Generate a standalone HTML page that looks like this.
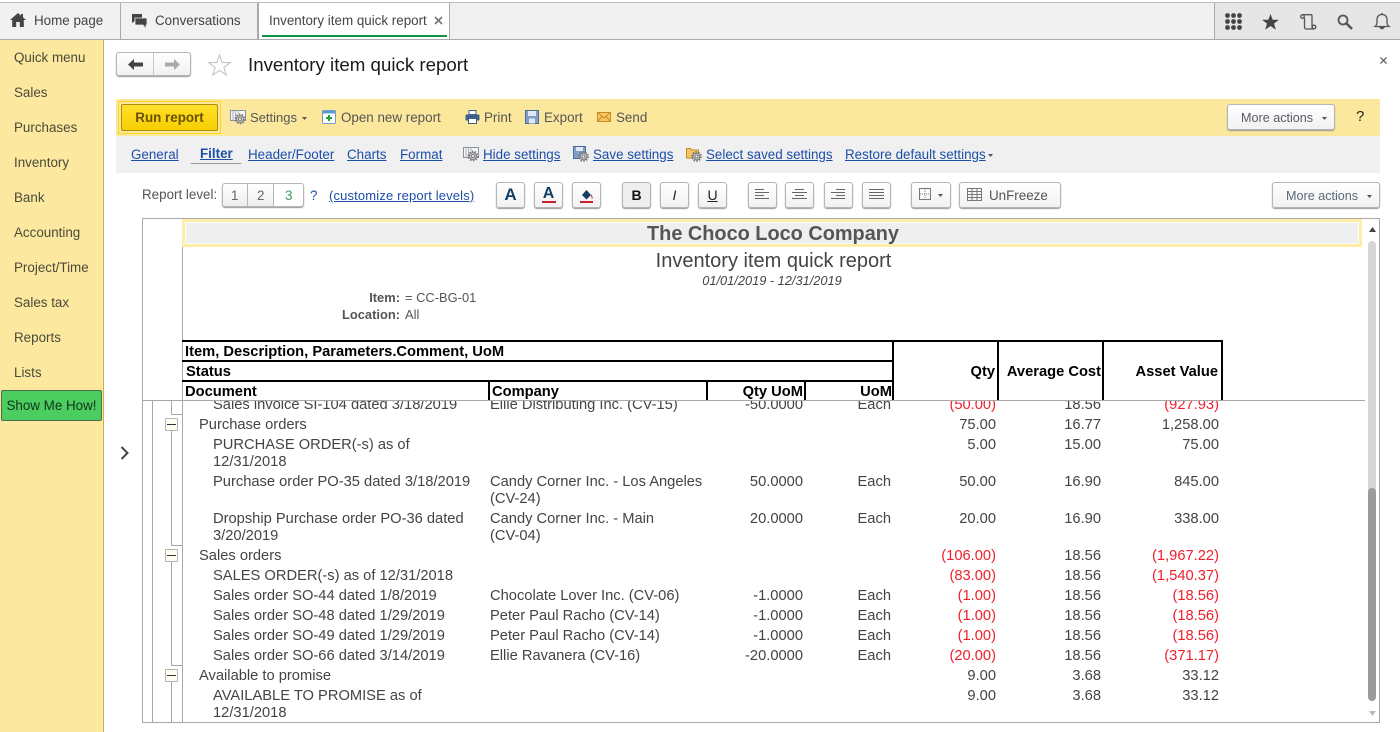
<!DOCTYPE html>
<html><head><meta charset="utf-8"><title>Inventory item quick report</title>
<style>
*{box-sizing:border-box}
html,body{margin:0;padding:0;width:1400px;height:732px;overflow:hidden;background:#fff;font-family:"Liberation Sans",sans-serif;font-size:13.4px;color:#4b4b4b}
.a{position:absolute}
.t{position:absolute;white-space:nowrap;line-height:20px;height:20px;margin-top:1px}
.r{position:absolute;white-space:nowrap;line-height:20px;height:20px;text-align:right;margin-top:1px}
.l{color:#1c4fa8;text-decoration:underline}
.b{position:absolute;background:linear-gradient(#fff,#f1f1f1);border:1px solid #b5b5b5;border-radius:3px;box-shadow:0 1px 1px #999}
.k{position:absolute;background:#000}
.red{color:#f0202c}
svg{position:absolute;overflow:visible}
#body .t,#body .r{color:#444;font-size:14.7px}
#body .red{color:#f0202c}
.h{font-size:14.7px;font-weight:bold;color:#000}
.m{position:absolute;left:14px;color:#4a4a3a;line-height:20px;margin-top:1px}
</style></head><body>

<!-- top bar -->
<div class="a" style="left:0;top:2px;width:1400px;height:38px;background:#f1f1f1;border-top:1px solid #bdbdbd;border-bottom:1px solid #aaa"></div>
<div class="a" style="left:120px;top:3px;width:1px;height:36px;background:#aaa"></div>
<div class="a" style="left:257px;top:3px;width:2px;height:36px;background:#aaa"></div>
<div class="a" style="left:259px;top:3px;width:191px;height:36px;background:#fff;border-right:1px solid #aaa"></div>
<div class="a" style="left:262px;top:35px;width:185px;height:2px;background:#0e9347"></div>
<div class="a" style="left:1214px;top:3px;width:186px;height:36px;background:#e6e6e6;border-left:1px solid #aaa"></div>
<svg style="left:10px;top:13px" width="16" height="14" viewBox="0 0 16 14"><path d="M8 0L0 7h2.200v7h4V9h3.600v5h4V7H16L13 4.400V1h-2v1.700z" fill="#444"/></svg>
<div class="t" style="left:34px;top:10px;color:#444">Home page</div>
<svg style="left:132px;top:14px" width="15" height="15" viewBox="0 0 15 15"><path d="M0 0h10v7H3L0 9z" fill="#444"/><path d="M3 4h12v7h-1v4l-3-4H3z" fill="#444" stroke="#f1f1f1" stroke-width=".8"/></svg>
<div class="t" style="left:155px;top:10px;color:#444">Conversations</div>
<div class="t" style="left:269px;top:10px;color:#444">Inventory item quick report</div>
<svg style="left:434px;top:16px" width="9" height="9" viewBox="0 0 9 9"><path d="M1 1l7 7M8 1L1 8" stroke="#777" stroke-width="1.700"/></svg>
<svg style="left:1225px;top:13px" width="17" height="17" viewBox="0 0 17 17" fill="#444"><circle cx="2.500" cy="2.500" r="2.400"/><circle cx="8.500" cy="2.500" r="2.400"/><circle cx="14.500" cy="2.500" r="2.400"/><circle cx="2.500" cy="8.500" r="2.400"/><circle cx="8.500" cy="8.500" r="2.400"/><circle cx="14.500" cy="8.500" r="2.400"/><circle cx="2.500" cy="14.500" r="2.400"/><circle cx="8.500" cy="14.500" r="2.400"/><circle cx="14.500" cy="14.500" r="2.400"/></svg>
<svg style="left:1262px;top:14px" width="17" height="16" viewBox="0 0 17 16"><path d="M8.500 0l2.200 5.800H17l-5 3.800 1.900 6.200-5.400-3.800-5.400 3.800L5 9.600 0 5.800h6.300z" fill="#444"/></svg>
<svg style="left:1300px;top:14px" width="17" height="16" viewBox="0 0 17 16" fill="none" stroke="#555" stroke-width="1.300"><circle cx="2.500" cy="2.500" r="1.800"/><path d="M2.500 .7H11Q12 .7 12 2V12.500Q12 15 14 15H6.500Q4.500 15 4.500 12.500V4"/><circle cx="14" cy="13" r="1.800"/></svg>
<svg style="left:1337px;top:14px" width="16" height="16" viewBox="0 0 16 16" fill="none" stroke="#555"><circle cx="6" cy="6" r="4.500" stroke-width="1.800"/><path d="M9.500 9.500L15 15" stroke-width="2.600"/></svg>
<svg style="left:1374px;top:13px" width="16" height="17" viewBox="0 0 16 17" fill="none" stroke="#555" stroke-width="1.300"><path d="M1 13.500Q3 12 3 9V6.500C3 3.500 5 1.500 8 1.500S13 3.500 13 6.500V9Q13 12 15 13.500Z"/><path d="M6 14.500Q8 17 10 14.500Z" fill="#555"/><path d="M8 0v2" stroke-width="1.600"/></svg>

<!-- sidebar -->
<div class="a" style="left:0;top:40px;width:104px;height:692px;background:#fce99f;border-right:1px solid #c8b04a"></div>
<div class="m" style="top:47px">Quick menu</div>
<div class="m" style="top:82px">Sales</div>
<div class="m" style="top:117px">Purchases</div>
<div class="m" style="top:152px">Inventory</div>
<div class="m" style="top:187px">Bank</div>
<div class="m" style="top:222px">Accounting</div>
<div class="m" style="top:257px">Project/Time</div>
<div class="m" style="top:292px">Sales tax</div>
<div class="m" style="top:327px">Reports</div>
<div class="m" style="top:362px">Lists</div>
<div class="a" style="left:1px;top:390px;width:101px;height:31px;background:#4bce5f;border:1px solid #4e6b50;border-radius:2px;color:#12331a;line-height:29px;text-align:center;white-space:nowrap">Show Me How!</div>
<svg style="left:120px;top:446px" width="9" height="14" viewBox="0 0 9 14"><path d="M1.500 1l6 6-6 6" fill="none" stroke="#444" stroke-width="2"/></svg>

<!-- title -->
<div class="b" style="left:116px;top:52px;width:75px;height:24px"></div>
<div class="a" style="left:153px;top:53px;width:1px;height:22px;background:#c8c8c8"></div>
<svg style="left:128px;top:59px" width="15" height="11" viewBox="0 0 15 11"><path d="M0 5.500L6 0v3.500h9v4H6V11z" fill="#444"/></svg>
<svg style="left:165px;top:59px" width="15" height="11" viewBox="0 0 15 11"><path d="M15 5.500L9 0v3.500H0v4h9V11z" fill="#aaa"/></svg>
<svg style="left:208px;top:54px" width="23" height="22" viewBox="0 0 25 24"><path d="M12.500 1l3 8.300h8.800l-7 5.300 2.600 8.400-7.400-5.100L5.100 23l2.600-8.400-7-5.300h8.800z" fill="#fff" stroke="#c4c4c4" stroke-width="1.200"/></svg>
<div class="a" style="left:248px;top:53px;font-size:18.7px;line-height:24px;color:#1a1a1a;white-space:nowrap">Inventory item quick report</div>
<svg style="left:1380px;top:57px" width="7" height="7" viewBox="0 0 8 8"><path d="M.5.500l7 7M7.500.500l-7 7" stroke="#555" stroke-width="1.300"/></svg>

<!-- yellow command bar -->
<div class="a" style="left:116px;top:99px;width:1264px;height:37px;background:#fce89d"></div>
<div class="a" style="left:118px;top:101px;width:103px;height:33px;border:1px solid #ffd520"></div>
<div class="a" style="left:121px;top:104px;width:97px;height:27px;background:linear-gradient(#ffdf2a,#f7cf00);border:1px solid #a98f0c;border-radius:2px;color:#6a5100;font-weight:bold;line-height:25px;text-align:center;white-space:nowrap">Run report</div>
<svg style="left:230px;top:110px" width="17" height="15" viewBox="0 0 17 15"><rect x=".5" y=".5" width="15" height="10" fill="#f8f8f8" stroke="#8a93a0"/><path d="M3 1v9M5.500 1v9M8 1v3" stroke="#a8b0bb"/><circle cx="10" cy="9" r="4.600" fill="none" stroke="#777" stroke-width="1.600" stroke-dasharray="1.600 1.300"/><circle cx="10" cy="9" r="3.400" fill="#ddd" stroke="#777"/><circle cx="10" cy="9" r="1.500" fill="#fff" stroke="#777"/></svg>
<div class="t" style="left:250px;top:107px;color:#555;font-size:13px">Settings</div>
<svg style="left:302px;top:117px" width="5" height="3"><path d="M0 0h5L2.500 3z" fill="#555"/></svg>
<svg style="left:322px;top:110px" width="14" height="14" viewBox="0 0 14 14"><rect x=".5" y=".5" width="13" height="13" rx="1" fill="#fff" stroke="#7a9cc6"/><rect x="1" y="1" width="12" height="2.500" fill="#5b9bd5"/><path d="M7 5v6M4 8h6" stroke="#23a036" stroke-width="2"/></svg>
<div class="t" style="left:341px;top:107px;color:#555">Open new report</div>
<svg style="left:465px;top:110px" width="15" height="14" viewBox="0 0 15 14"><rect x="4" y=".5" width="7" height="4" fill="#fff" stroke="#3f5f8a"/><rect x=".5" y="4.500" width="14" height="6" rx="1" fill="#3f5f8a"/><rect x="3.500" y="8.500" width="8" height="5" fill="#fff" stroke="#3f5f8a"/></svg>
<div class="t" style="left:484px;top:107px;color:#555">Print</div>
<svg style="left:525px;top:110px" width="14" height="14" viewBox="0 0 14 14"><rect x=".5" y=".5" width="13" height="13" fill="#7f9fc8" stroke="#4a6c9c"/><rect x="3" y="1" width="8" height="5" fill="#dfe8f3"/><rect x="4" y="8.500" width="6" height="5" fill="#dfe8f3"/></svg>
<div class="t" style="left:544px;top:107px;color:#555">Export</div>
<svg style="left:597px;top:112px" width="14" height="10" viewBox="0 0 14 10"><rect x=".5" y=".5" width="13" height="9" fill="#f6c667" stroke="#c98a23"/><path d="M.5.500L7 6 13.500.500M.5 9.500L5 4.500M13.500 9.500L9 4.500" fill="none" stroke="#c98a23"/></svg>
<div class="t" style="left:616px;top:107px;color:#555">Send</div>
<div class="b" style="left:1227px;top:104px;width:108px;height:26px"></div>
<div class="t" style="left:1241px;top:107px;color:#5a5a6a;font-size:12.6px">More actions</div>
<svg style="left:1322px;top:117px" width="5" height="3"><path d="M0 0h5L2.500 3z" fill="#555"/></svg>
<div class="t" style="left:1356px;top:106px;color:#222;font-size:15px">?</div>

<!-- gray settings bar -->
<div class="a" style="left:116px;top:136px;width:1264px;height:37px;background:#f0f0f0"></div>
<div class="t l" style="left:131px;top:144px">General </div>
<div class="a" style="left:191px;top:163px;width:50px;height:1px;background:#999"></div>
<div class="t l" style="left:200px;top:143px;font-weight:bold;">Filter</div>
<div class="t l" style="left:248px;top:144px">Header/Footer</div>
<div class="t l" style="left:347px;top:144px">Charts</div>
<div class="t l" style="left:400px;top:144px">Format</div>
<svg style="left:463px;top:147px" width="17" height="15" viewBox="0 0 17 15"><rect x=".5" y=".5" width="15" height="10" fill="#f8f8f8" stroke="#8a93a0"/><path d="M3 1v9M5.500 1v9M8 1v3" stroke="#a8b0bb"/><circle cx="10" cy="9" r="4.600" fill="none" stroke="#777" stroke-width="1.600" stroke-dasharray="1.600 1.300"/><circle cx="10" cy="9" r="3.400" fill="#ddd" stroke="#777"/><circle cx="10" cy="9" r="1.500" fill="#fff" stroke="#777"/></svg>
<div class="t l" style="left:483px;top:144px">Hide settings</div>
<svg style="left:573px;top:146px" width="16" height="16" viewBox="0 0 16 16"><rect x=".5" y=".5" width="12" height="12" fill="#7f9fc8" stroke="#4a6c9c"/><rect x="3" y="1" width="7" height="4" fill="#dfe8f3"/><circle cx="10.500" cy="10.500" r="4.600" fill="none" stroke="#777" stroke-width="1.600" stroke-dasharray="1.600 1.300"/><circle cx="10.500" cy="10.500" r="3.400" fill="#ddd" stroke="#777"/><circle cx="10.500" cy="10.500" r="1.500" fill="#fff" stroke="#777"/></svg>
<div class="t l" style="left:593px;top:144px">Save settings</div>
<svg style="left:686px;top:146px" width="16" height="16" viewBox="0 0 16 16"><path d="M.5 2.500h4l1 1.500h7v8h-12z" fill="#f4c668" stroke="#c98a23"/><circle cx="10.500" cy="10.500" r="4.600" fill="none" stroke="#777" stroke-width="1.600" stroke-dasharray="1.600 1.300"/><circle cx="10.500" cy="10.500" r="3.400" fill="#ddd" stroke="#777"/><circle cx="10.500" cy="10.500" r="1.500" fill="#fff" stroke="#777"/></svg>
<div class="t l" style="left:706px;top:144px">Select saved settings</div>
<div class="t l" style="left:845px;top:144px">Restore default settings</div>
<svg style="left:988px;top:154px" width="5" height="3"><path d="M0 0h5L2.500 3z" fill="#555"/></svg>

<!-- format toolbar -->
<div class="t" style="left:142px;top:184px;color:#555">Report level:</div>
<div class="b" style="left:222px;top:183px;width:82px;height:24px;background:linear-gradient(#fff,#eee)"></div>
<div class="a" style="left:247px;top:184px;width:1px;height:22px;background:#b5b5b5"></div>
<div class="a" style="left:273px;top:184px;width:1px;height:22px;background:#b5b5b5"></div>
<div class="a" style="left:274px;top:184px;width:29px;height:22px;background:#fff;border-radius:0 3px 3px 0"></div>
<div class="t" style="left:231px;top:185px;color:#666">1</div>
<div class="t" style="left:257px;top:185px;color:#666">2</div>
<div class="t" style="left:285px;top:185px;color:#3b9a5c">3</div>
<div class="t" style="left:310px;top:185px;color:#1c4fa8">?</div>
<div class="t" style="left:329px;top:185px;font-size:13px;letter-spacing:.15px;color:#1c4fa8;"><u>(customize report levels)</u></div>

<div class="b" style="left:496px;top:182px;width:29px;height:26px"></div>
<div class="t" style="left:496px;top:184px;width:29px;text-align:center;font-weight:bold;font-size:17px;color:#123f66">A</div>
<div class="b" style="left:534px;top:182px;width:29px;height:26px"></div>
<div class="t" style="left:534px;top:183px;width:29px;text-align:center;font-weight:bold;font-size:16px;color:#123f66">A</div>
<div class="a" style="left:542px;top:201px;width:14px;height:2px;background:#cc1f2e"></div>
<div class="b" style="left:572px;top:182px;width:29px;height:26px"></div>
<svg style="left:580px;top:187px" width="13" height="16" viewBox="0 0 13 16"><path d="M6.500 0v3L2 8l4.500 4.500L11 8 6.500 3z" fill="#123f66"/><path d="M11 8q1.500 2 1 3.500" stroke="#cc1f2e" fill="none"/><rect x="0" y="14" width="13" height="2" fill="#cc1f2e"/></svg>
<div class="b" style="left:622px;top:182px;width:29px;height:26px;background:#eee"></div>
<div class="t" style="left:622px;top:184px;width:29px;text-align:center;font-weight:bold;color:#111;font-size:14px">B</div>
<div class="b" style="left:660px;top:182px;width:29px;height:26px"></div>
<div class="t" style="left:660px;top:184px;width:29px;text-align:center;font-style:italic;color:#222;font-size:14px">I</div>
<div class="b" style="left:698px;top:182px;width:29px;height:26px"></div>
<div class="t" style="left:698px;top:184px;width:29px;text-align:center;color:#222;font-size:14px"><u>U</u></div>
<div class="b" style="left:748px;top:182px;width:29px;height:26px"></div>
<svg style="left:755px;top:189px" width="15" height="11" viewBox="0 0 15 11" stroke="#666"><path d="M0 .5h9M0 3.500h14M0 6.500h9M0 9.500h14"/></svg>
<div class="b" style="left:785px;top:182px;width:29px;height:26px"></div>
<svg style="left:792px;top:189px" width="15" height="11" viewBox="0 0 15 11" stroke="#666"><path d="M3 .5h9M0 3.500h15M3 6.500h9M0 9.500h15"/></svg>
<div class="b" style="left:824px;top:182px;width:29px;height:26px"></div>
<svg style="left:831px;top:189px" width="15" height="11" viewBox="0 0 15 11" stroke="#666"><path d="M5 .5h9M0 3.500h14M5 6.500h9M0 9.500h14"/></svg>
<div class="b" style="left:862px;top:182px;width:29px;height:26px"></div>
<svg style="left:869px;top:189px" width="15" height="11" viewBox="0 0 15 11" stroke="#666"><path d="M0 .5h15M0 3.500h15M0 6.500h15M0 9.500h15"/></svg>
<div class="b" style="left:911px;top:182px;width:40px;height:26px"></div>
<svg style="left:919px;top:188px" width="13" height="13" viewBox="0 0 13 13"><rect x=".5" y=".5" width="11" height="11" fill="none" stroke="#777"/><path d="M6 1v10M1 6h10" stroke="#888" stroke-dasharray="1 1"/></svg>
<svg style="left:938px;top:194px" width="5" height="3"><path d="M0 0h5L2.500 3z" fill="#555"/></svg>
<div class="b" style="left:959px;top:182px;width:102px;height:26px"></div>
<svg style="left:967px;top:188px" width="15" height="13" viewBox="0 0 15 13" fill="none" stroke="#777"><rect x=".5" y=".5" width="14" height="12"/><path d="M.5 3.500h14M.5 6.500h14M.5 9.500h14M5 .5v12M10 .5v12"/></svg>
<div class="t" style="left:989px;top:185px;color:#555">UnFreeze</div>
<div class="b" style="left:1272px;top:182px;width:108px;height:26px"></div>
<div class="t" style="left:1286px;top:185px;color:#5a6a7a;font-size:12.6px">More actions</div>
<svg style="left:1367px;top:195px" width="5" height="3"><path d="M0 0h5L2.500 3z" fill="#555"/></svg>

<!-- report frame -->
<div class="a" style="left:142px;top:218px;width:1238px;height:505px;border:1px solid #a8a8a8"></div>
<div class="a" style="left:182px;top:219px;width:1px;height:503px;background:#a8a8a8"></div>
<div class="a" style="left:182px;top:219px;width:1180px;height:28px;background:#efefef;border:3px solid #fdeea6;outline:1px solid #fff;outline-offset:-4px"></div>
<div class="a" style="left:182px;top:221px;width:1182px;height:26px;line-height:26px;text-align:center;font-weight:bold;font-size:19.9px;color:#555;white-space:nowrap">The Choco Loco Company</div>
<div class="a" style="left:182px;top:249px;width:1183px;height:24px;line-height:24px;text-align:center;font-size:20px;color:#444;white-space:nowrap">Inventory item quick report</div>
<div class="a" style="left:182px;top:272px;width:1180px;height:17px;line-height:17px;text-align:center;font-size:12.8px;font-style:italic;color:#444;white-space:nowrap">01/01/2019 - 12/31/2019</div>
<div class="r" style="right:1000px;top:287px;font-size:12.9px;font-weight:bold;color:#555">Item:</div>
<div class="t" style="left:405px;top:287px;font-size:12.9px;color:#555">= CC-BG-01</div>
<div class="r" style="right:1000px;top:304px;font-size:12.9px;font-weight:bold;color:#555">Location:</div>
<div class="t" style="left:405px;top:304px;font-size:12.9px;color:#555">All</div>

<!-- table header -->
<div class="k" style="left:182px;top:340px;width:1040px;height:2px"></div>
<div class="k" style="left:182px;top:360px;width:711px;height:2px"></div>
<div class="k" style="left:182px;top:380px;width:711px;height:2px"></div>
<div class="k" style="left:488px;top:380px;width:2px;height:20px"></div>
<div class="k" style="left:706px;top:380px;width:2px;height:20px"></div>
<div class="k" style="left:804px;top:380px;width:2px;height:20px"></div>
<div class="k" style="left:892px;top:340px;width:2px;height:60px"></div>
<div class="k" style="left:997px;top:340px;width:2px;height:60px"></div>
<div class="k" style="left:1102px;top:340px;width:2px;height:60px"></div>
<div class="k" style="left:1221px;top:340px;width:2px;height:60px"></div>
<div class="t h" style="left:185px;top:341px">Item, Description, Parameters.Comment, UoM</div>
<div class="t h" style="left:186px;top:361px">Status</div>
<div class="t h" style="left:185px;top:381px">Document</div>
<div class="t h" style="left:492px;top:381px">Company</div>
<div class="r h" style="right:597px;top:381px">Qty UoM</div>
<div class="r h" style="right:508px;top:381px">UoM</div>
<div class="r h" style="right:405px;top:361px">Qty</div>
<div class="r h" style="right:299px;top:361px">Average Cost</div>
<div class="r h" style="right:182px;top:361px">Asset Value</div>
<div class="a" style="left:142px;top:400px;width:1223px;height:1px;background:#a8a8a8"></div>

<!-- tree lines -->
<div class="a" style="left:152px;top:401px;width:1px;height:321px;background:#a8a8a8"></div>
<div class="a" style="left:171px;top:401px;width:1px;height:14px;background:#a8a8a8"></div>
<div class="a" style="left:171px;top:414px;width:11px;height:1px;background:#a8a8a8"></div>
<div class="a" style="left:171px;top:431px;width:1px;height:115px;background:#a8a8a8"></div>
<div class="a" style="left:171px;top:545px;width:11px;height:1px;background:#a8a8a8"></div>
<div class="a" style="left:171px;top:562px;width:1px;height:104px;background:#a8a8a8"></div>
<div class="a" style="left:171px;top:665px;width:11px;height:1px;background:#a8a8a8"></div>
<div class="a" style="left:171px;top:682px;width:1px;height:40px;background:#a8a8a8"></div>
<div class="a" style="left:165px;top:418px;width:13px;height:13px;background:#fffdf0;border:1px solid #b5b5b5;border-radius:1px"><div class="a" style="left:1px;top:5px;width:9px;height:1px;background:#333"></div></div>
<div class="a" style="left:165px;top:549px;width:13px;height:13px;background:#fffdf0;border:1px solid #b5b5b5;border-radius:1px"><div class="a" style="left:1px;top:5px;width:9px;height:1px;background:#333"></div></div>
<div class="a" style="left:165px;top:669px;width:13px;height:13px;background:#fffdf0;border:1px solid #b5b5b5;border-radius:1px"><div class="a" style="left:1px;top:5px;width:9px;height:1px;background:#333"></div></div>

<!-- body rows -->
<div id="body" class="a" style="left:0;top:401px;width:1400px;height:321px;overflow:hidden">
<div class="t" style="left:213px;top:-7px">Sales invoice SI-104 dated 3/18/2019</div><div class="t" style="left:490px;top:-7px">Ellie Distributing Inc. (CV-15)</div><div class="r" style="right:597px;top:-7px">-50.0000</div><div class="r" style="right:509px;top:-7px">Each</div><div class="r red" style="right:404px;top:-7px">(50.00)</div><div class="r" style="right:299px;top:-7px">18.56</div><div class="r red" style="right:181px;top:-7px">(927.93)</div>
<div class="t" style="left:199px;top:13px">Purchase orders</div><div class="r" style="right:404px;top:13px">75.00</div><div class="r" style="right:299px;top:13px">16.77</div><div class="r" style="right:181px;top:13px">1,258.00</div>
<div class="t" style="left:213px;top:33px">PURCHASE ORDER(-s) as of</div><div class="t" style="left:213px;top:50px">12/31/2018</div><div class="r" style="right:404px;top:33px">5.00</div><div class="r" style="right:299px;top:33px">15.00</div><div class="r" style="right:181px;top:33px">75.00</div>
<div class="t" style="left:213px;top:70px">Purchase order PO-35 dated 3/18/2019</div><div class="t" style="left:490px;top:70px">Candy Corner Inc. - Los Angeles</div><div class="t" style="left:490px;top:87px">(CV-24)</div><div class="r" style="right:597px;top:70px">50.0000</div><div class="r" style="right:509px;top:70px">Each</div><div class="r" style="right:404px;top:70px">50.00</div><div class="r" style="right:299px;top:70px">16.90</div><div class="r" style="right:181px;top:70px">845.00</div>
<div class="t" style="left:213px;top:107px">Dropship Purchase order PO-36 dated</div><div class="t" style="left:213px;top:124px">3/20/2019</div><div class="t" style="left:490px;top:107px">Candy Corner Inc. - Main</div><div class="t" style="left:490px;top:124px">(CV-04)</div><div class="r" style="right:597px;top:107px">20.0000</div><div class="r" style="right:509px;top:107px">Each</div><div class="r" style="right:404px;top:107px">20.00</div><div class="r" style="right:299px;top:107px">16.90</div><div class="r" style="right:181px;top:107px">338.00</div>
<div class="t" style="left:199px;top:144px">Sales orders</div><div class="r red" style="right:404px;top:144px">(106.00)</div><div class="r" style="right:299px;top:144px">18.56</div><div class="r red" style="right:181px;top:144px">(1,967.22)</div>
<div class="t" style="left:213px;top:164px">SALES ORDER(-s) as of 12/31/2018</div><div class="r red" style="right:404px;top:164px">(83.00)</div><div class="r" style="right:299px;top:164px">18.56</div><div class="r red" style="right:181px;top:164px">(1,540.37)</div>
<div class="t" style="left:213px;top:184px">Sales order SO-44 dated 1/8/2019</div><div class="t" style="left:490px;top:184px">Chocolate Lover Inc. (CV-06)</div><div class="r" style="right:597px;top:184px">-1.0000</div><div class="r" style="right:509px;top:184px">Each</div><div class="r red" style="right:404px;top:184px">(1.00)</div><div class="r" style="right:299px;top:184px">18.56</div><div class="r red" style="right:181px;top:184px">(18.56)</div>
<div class="t" style="left:213px;top:204px">Sales order SO-48 dated 1/29/2019</div><div class="t" style="left:490px;top:204px">Peter Paul Racho (CV-14)</div><div class="r" style="right:597px;top:204px">-1.0000</div><div class="r" style="right:509px;top:204px">Each</div><div class="r red" style="right:404px;top:204px">(1.00)</div><div class="r" style="right:299px;top:204px">18.56</div><div class="r red" style="right:181px;top:204px">(18.56)</div>
<div class="t" style="left:213px;top:224px">Sales order SO-49 dated 1/29/2019</div><div class="t" style="left:490px;top:224px">Peter Paul Racho (CV-14)</div><div class="r" style="right:597px;top:224px">-1.0000</div><div class="r" style="right:509px;top:224px">Each</div><div class="r red" style="right:404px;top:224px">(1.00)</div><div class="r" style="right:299px;top:224px">18.56</div><div class="r red" style="right:181px;top:224px">(18.56)</div>
<div class="t" style="left:213px;top:244px">Sales order SO-66 dated 3/14/2019</div><div class="t" style="left:490px;top:244px">Ellie Ravanera (CV-16)</div><div class="r" style="right:597px;top:244px">-20.0000</div><div class="r" style="right:509px;top:244px">Each</div><div class="r red" style="right:404px;top:244px">(20.00)</div><div class="r" style="right:299px;top:244px">18.56</div><div class="r red" style="right:181px;top:244px">(371.17)</div>
<div class="t" style="left:199px;top:264px">Available to promise</div><div class="r" style="right:404px;top:264px">9.00</div><div class="r" style="right:299px;top:264px">3.68</div><div class="r" style="right:181px;top:264px">33.12</div>
<div class="t" style="left:213px;top:284px">AVAILABLE TO PROMISE as of</div><div class="t" style="left:213px;top:301px">12/31/2018</div><div class="r" style="right:404px;top:284px">9.00</div><div class="r" style="right:299px;top:284px">3.68</div><div class="r" style="right:181px;top:284px">33.12</div>
</div>

<!-- scrollbar -->
<svg style="left:1369px;top:227px" width="7" height="5"><path d="M0 5L3.500 0 7 5z" fill="#444"/></svg>
<div class="a" style="left:1368px;top:241px;width:8px;height:250px;background:#d6d6d6;border-radius:4px 4px 0 0"></div>
<div class="a" style="left:1368px;top:488px;width:8px;height:213px;background:#9b9b9b;border-radius:4px"></div>
<svg style="left:1369px;top:711px" width="7" height="5"><path d="M0 0L3.500 5 7 0z" fill="#bbb"/></svg>
</body></html>
